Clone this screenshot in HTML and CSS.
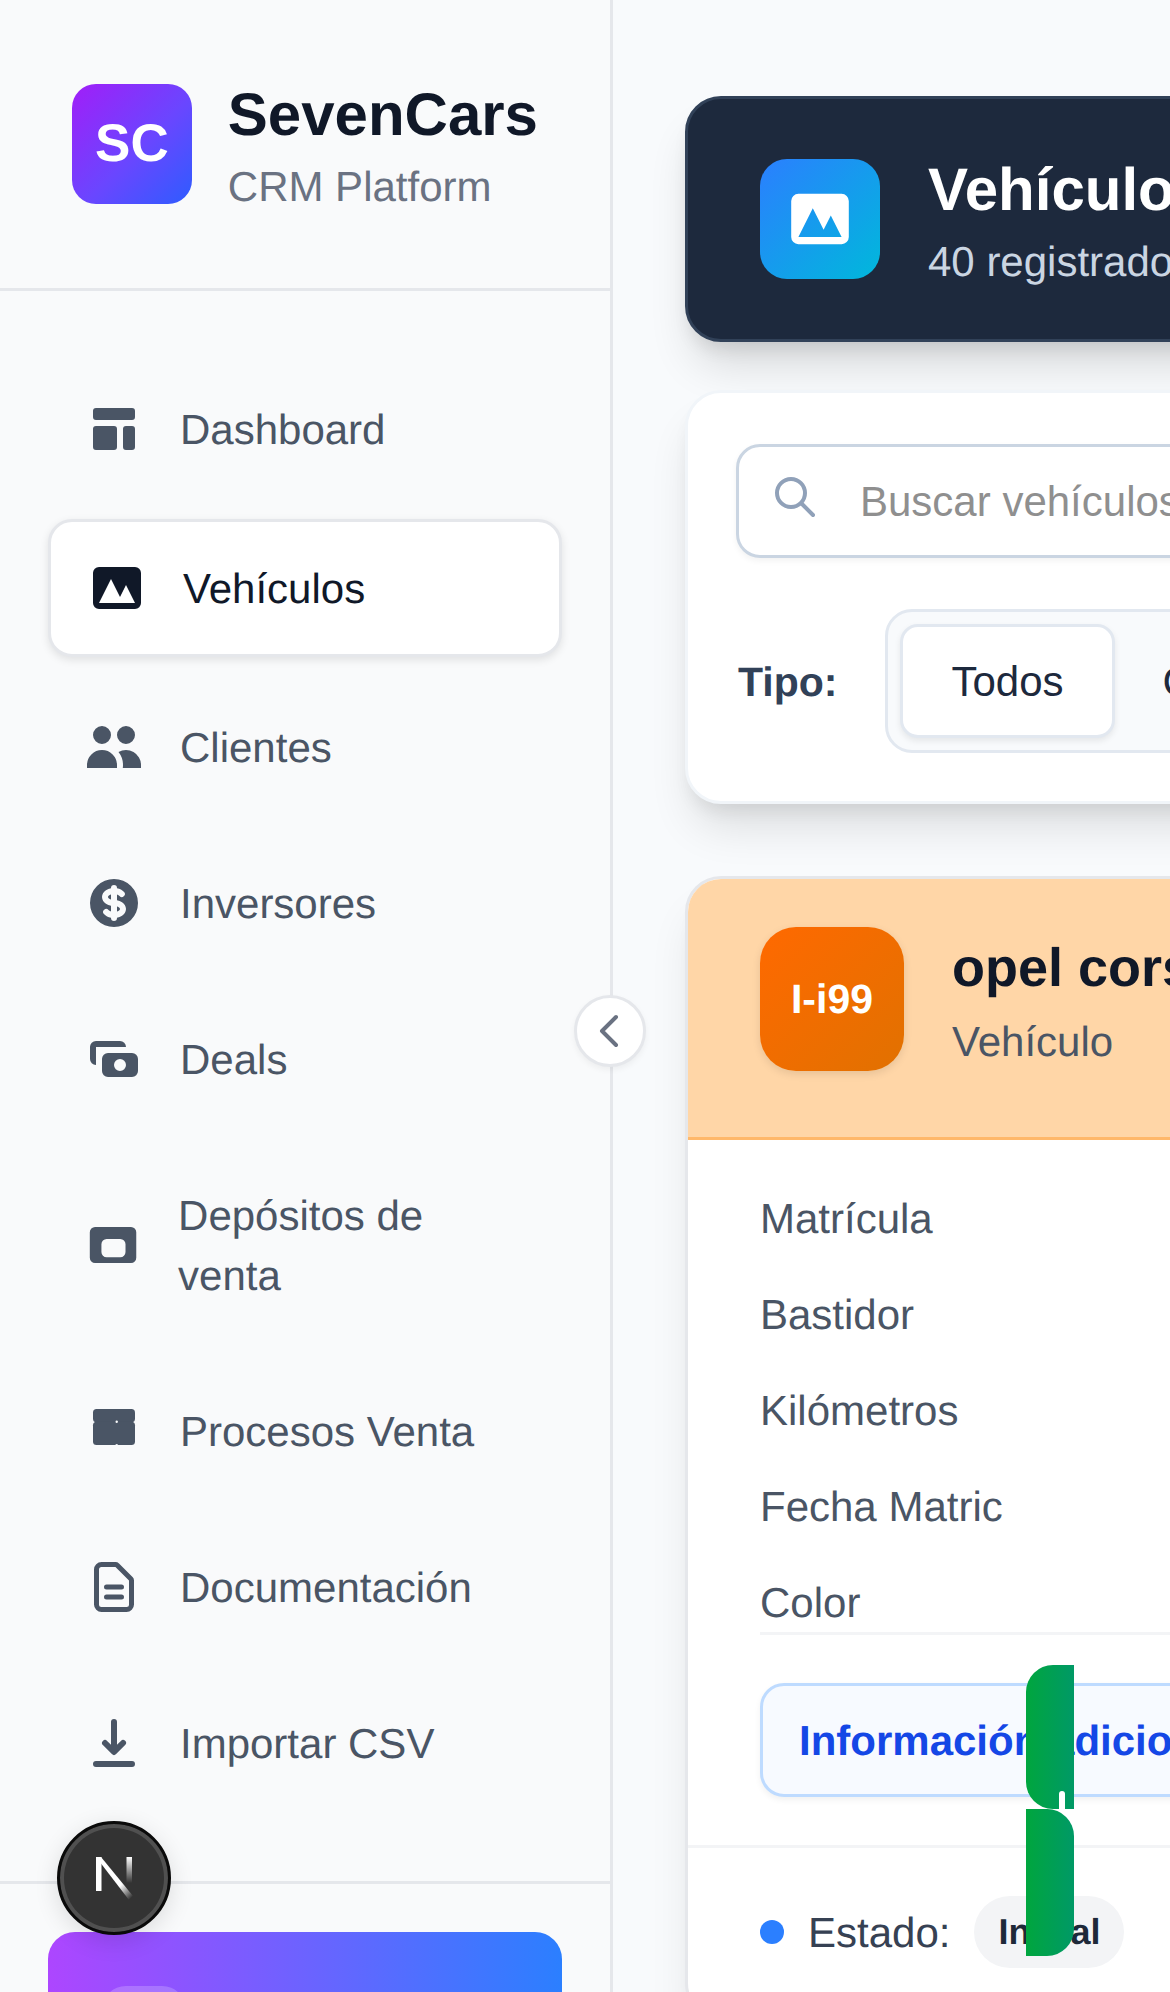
FILE: index.html
```html
<!doctype html>
<html lang="es">
<head>
<meta charset="utf-8">
<title>SevenCars CRM</title>
<link rel="stylesheet" href="styles.css">
</head>
<body>
<div class="app">
  <aside class="sidebar">
    <div class="brand">
      <div class="brand-logo">SC</div>
      <div>
        <div class="brand-name">SevenCars</div>
        <div class="brand-sub">CRM Platform</div>
      </div>
    </div>
    <nav class="nav">
      <a class="nav-item">
        <svg class="nav-icon" viewBox="0 0 20 20" fill="currentColor"><path d="M3 4a1 1 0 011-1h12a1 1 0 011 1v2a1 1 0 01-1 1H4a1 1 0 01-1-1V4zM3 10a1 1 0 011-1h6a1 1 0 011 1v6a1 1 0 01-1 1H4a1 1 0 01-1-1v-6zM14 9a1 1 0 00-1 1v6a1 1 0 001 1h2a1 1 0 001-1v-6a1 1 0 00-1-1h-2z"/></svg>
        <span>Dashboard</span>
      </a>
      <a class="nav-item active">
        <svg class="nav-icon" viewBox="0 0 20 20" fill="currentColor"><path fill-rule="evenodd" d="M4 3a2 2 0 00-2 2v10a2 2 0 002 2h12a2 2 0 002-2V5a2 2 0 00-2-2H4zm12 12H4l4-8 3 6 2-4 3 6z"/></svg>
        <span>Vehículos</span>
      </a>
      <a class="nav-item">
        <svg class="nav-icon" viewBox="0 0 20 20" fill="currentColor"><path d="M9 6a3 3 0 11-6 0 3 3 0 016 0zM17 6a3 3 0 11-6 0 3 3 0 016 0zM12.93 17c.046-.327.07-.66.07-1a6.97 6.97 0 00-1.5-4.33A5 5 0 0119 16v1h-6.07zM6 11a5 5 0 015 5v1H1v-1a5 5 0 015-5z"/></svg>
        <span>Clientes</span>
      </a>
      <a class="nav-item">
        <svg class="nav-icon" viewBox="0 0 20 20" fill="currentColor"><path d="M8.433 7.418c.155-.103.346-.196.567-.267v1.698a2.305 2.305 0 01-.567-.267C8.07 8.34 8 8.114 8 8c0-.114.07-.34.433-.582zM11 12.849v-1.698c.22.071.412.164.567.267.364.243.433.468.433.582 0 .114-.07.34-.433.582a2.305 2.305 0 01-.567.267z"/><path fill-rule="evenodd" d="M10 18a8 8 0 100-16 8 8 0 000 16zm1-13a1 1 0 10-2 0v.092a4.535 4.535 0 00-1.676.662C6.602 6.234 6 7.009 6 8c0 .99.602 1.765 1.324 2.246.48.32 1.054.545 1.676.662v1.941c-.391-.127-.68-.317-.843-.504a1 1 0 10-1.51 1.31c.562.649 1.413 1.076 2.353 1.253V15a1 1 0 102 0v-.092a4.535 4.535 0 001.676-.662C13.398 13.766 14 12.991 14 12c0-.99-.602-1.765-1.324-2.246A4.535 4.535 0 0011 9.092V7.151c.391.127.68.317.843.504a1 1 0 101.511-1.31c-.563-.649-1.413-1.076-2.354-1.253V5z"/></svg>
        <span>Inversores</span>
      </a>
      <a class="nav-item">
        <svg class="nav-icon" viewBox="0 0 20 20" fill="currentColor"><path fill-rule="evenodd" d="M4 4a2 2 0 00-2 2v4a2 2 0 002 2V6h10a2 2 0 00-2-2H4zm2 6a2 2 0 012-2h8a2 2 0 012 2v4a2 2 0 01-2 2H8a2 2 0 01-2-2v-4zm6 4a2 2 0 100-4 2 2 0 000 4z"/></svg>
        <span>Deals</span>
      </a>
      <a class="nav-item">
        <svg class="nav-icon" viewBox="0 0 20 20" fill="currentColor"><path fill-rule="evenodd" d="M3.800 3.800h12.400a1.800 1.800 0 011.800 1.800v8.800a1.800 1.800 0 01-1.800 1.800H3.800a1.800 1.800 0 01-1.800-1.800V5.600a1.800 1.800 0 011.800-1.800zM7.800 7.900a1.800 1.800 0 00-1.800 1.800v2.700a1.800 1.800 0 001.800 1.800h4.700a1.800 1.800 0 001.800-1.800V9.700a1.800 1.800 0 00-1.800-1.800z"/></svg>
        <span>Depósitos de venta</span>
      </a>
      <a class="nav-item">
        <svg class="nav-icon" viewBox="0 0 20 20" fill="currentColor"><rect x="3" y="2.700" width="14" height="4.400" rx="1.200"/><rect x="3" y="6.900" width="14" height="7.800" rx="1.200"/><circle class="nav-icon-gap" cx="10.900" cy="6.900" r=".4"/><circle class="nav-icon-gap" cx="10.900" cy="14.800" r=".5"/></svg>
        <span>Procesos Venta</span>
      </a>
      <a class="nav-item">
        <svg class="nav-icon" viewBox="0 0 24 24" fill="none" stroke="currentColor" stroke-width="2" stroke-linecap="round" stroke-linejoin="round"><path d="M9 12h6m-6 4h6m2 5H7a2 2 0 01-2-2V5a2 2 0 012-2h5.586a1 1 0 01.707.293l5.414 5.414a1 1 0 01.293.707V19a2 2 0 01-2 2z"/></svg>
        <span>Documentación</span>
      </a>
      <a class="nav-item">
        <svg class="nav-icon" viewBox="0 0 20 20" fill="currentColor"><path fill-rule="evenodd" d="M3 17a1 1 0 011-1h12a1 1 0 110 2H4a1 1 0 01-1-1zm3.293-7.707a1 1 0 011.414 0L9 10.586V3a1 1 0 112 0v7.586l1.293-1.293a1 1 0 111.414 1.414l-3 3a1 1 0 01-1.414 0l-3-3a1 1 0 010-1.414z"/></svg>
        <span>Importar CSV</span>
      </a>
    </nav>
    <div class="side-footer">
      <div class="user-card">
        <div class="user-avatar"></div>
      </div>
    </div>
  </aside>

  <main class="main">
    <div class="main-inner">
      <header class="page-head">
        <div class="page-icon">
          <svg viewBox="0 0 20 20" fill="currentColor"><path fill-rule="evenodd" d="M4 3a2 2 0 00-2 2v10a2 2 0 002 2h12a2 2 0 002-2V5a2 2 0 00-2-2H4zm12 12H4l4-8 3 6 2-4 3 6z"/></svg>
        </div>
        <div>
          <h1 class="page-title">Vehículos</h1>
          <div class="page-sub">40 registrados</div>
        </div>
      </header>

      <section class="filters">
        <div class="search">
          <svg class="search-icon" viewBox="0 0 24 24" fill="none" stroke="currentColor" stroke-width="2" stroke-linecap="round" stroke-linejoin="round"><path d="M21 21l-6-6m2-5a7 7 0 11-14 0 7 7 0 0114 0z"/></svg>
          <input class="search-input" type="text" placeholder="Buscar vehículos...">
        </div>
        <div class="type-row">
          <span class="type-label">Tipo:</span>
          <div class="segment">
            <button class="seg-btn on">Todos</button>
            <button class="seg-btn">Coches</button>
          </div>
        </div>
      </section>

      <article class="car">
        <div class="car-head">
          <div class="car-avatar">I-i99</div>
          <div>
            <h2 class="car-title">opel corsa</h2>
            <div class="car-sub">Vehículo</div>
          </div>
        </div>
        <div class="car-body">
          <ul class="specs">
            <li>Matrícula</li>
            <li>Bastidor</li>
            <li>Kilómetros</li>
            <li>Fecha Matric</li>
            <li>Color</li>
          </ul>
          <div class="more-info">Información adicional</div>
        </div>
        <div class="car-foot">
          <span class="dot"></span>
          <span class="state-label">Estado:</span>
          <span class="state-pill">Inicial</span>
        </div>
      </article>
    </div>
  </main>

  <!-- cosas que flotan encima -->
  <button class="collapse">
    <svg viewBox="0 0 24 24" fill="none" stroke="currentColor" stroke-width="2" stroke-linecap="round" stroke-linejoin="round"><path d="M15 19l-7-7 7-7"/></svg>
  </button>
  <div class="dev-badge">
    <svg viewBox="0 0 38 43" width="38" height="43">
      <defs>
        <linearGradient id="nDiag" x1="0.300" y1="0.300" x2="0.900" y2="1">
          <stop offset="0.550" stop-color="#fff"/>
          <stop offset="1" stop-color="#fff" stop-opacity="0"/>
        </linearGradient>
        <linearGradient id="nStem" x1="0" y1="0" x2="0" y2="1">
          <stop offset="0" stop-color="#fff"/>
          <stop offset="1" stop-color="#fff" stop-opacity="0"/>
        </linearGradient>
      </defs>
      <rect x="0" y="0" width="5.500" height="34" fill="#fff"/>
      <polygon points="0,0 5,0 37,39 33,43" fill="url(#nDiag)"/>
      <rect x="30.500" y="0" width="5.500" height="26" fill="url(#nStem)"/>
    </svg>
  </div>
  <div class="tab tab-top"><span class="tab-notch"></span></div>
  <div class="tab tab-bottom"></div>
</div>
</body>
</html>
```

FILE: styles.css
```css
* {
	box-sizing: border-box;
}
html, body {
	margin: 0;
	padding: 0;
}
body {
	width: 1170px;
	height: 1992px;
	overflow: hidden;
	font-family: "Liberation Sans", Arial, sans-serif;
	font-size: 42px;
	line-height: 60px;
	color: #101828;
	text-rendering: geometricPrecision;
}
h1, h2, ul {
	margin: 0;
	padding: 0;
}
.app {
	position: relative;
	display: flex;
	width: 1170px;
	height: 1992px;
	overflow: hidden;
	background: #f8fafc;
}

/* el texto cae 1px mas abajo, sin cambiar la altura de la linea */
.brand-name, .brand-sub, .nav-item span, .page-title, .page-sub,
.type-label, .car-sub, .specs li, .state-label {
	padding-top: 1px;
	margin-bottom: -1px;
}

/* sidebar */
.sidebar {
	flex: none;
	width: 613px;
	height: 1992px;
	background: #f9fafb;
	border-right: 3px solid #e5e7eb;
}
.brand {
	display: flex;
	align-items: center;
	gap: 36px;
	padding: 72px;
	border-bottom: 3px solid #e5e7eb;
}
.brand-logo {
	display: flex;
	align-items: center;
	justify-content: center;
	width: 120px;
	height: 120px;
	border-radius: 24px;
	background: linear-gradient(135deg, #a11ef8, #6a46ff 55%, #2e5cff);
	color: #fff;
	font-size: 53px;
	font-weight: bold;
}
.brand-name {
	font-size: 60px;
	line-height: 84px;
	font-weight: bold;
	color: #101828;
}
.brand-sub {
	color: #6a7282;
}
.nav {
	display: flex;
	flex-direction: column;
	gap: 24px;
	padding: 72px 48px;
}
.nav-item {
	display: flex;
	align-items: center;
	gap: 36px;
	padding: 36px;
	border-radius: 24px;
	color: #4a5565;
}
.nav-item.active {
	background: #fff;
	color: #101828;
	border: 3px solid #e5e7eb;
	box-shadow: 0 3px 9px rgba(0, 0, 0, .1);
}
.nav-icon {
	width: 60px;
	height: 60px;
}
.nav-icon-gap {
	fill: #f9fafb;
}
.side-footer {
	padding: 48px;
	border-top: 3px solid #e5e7eb;
}
.user-card {
	height: 240px;
	padding: 54px;
	border-radius: 27px;
	background: linear-gradient(90deg, #ad46ff, #2b7fff);
}
.user-avatar {
	width: 84px;
	height: 84px;
	border-radius: 24px;
	background: rgba(255, 255, 255, .2);
}

/* main */
.main {
	flex: 1;
	min-width: 0;
	padding: 96px 0 0 72px;
}
.main-inner {
	width: 1100px;
}
.page-head {
	display: flex;
	align-items: center;
	gap: 48px;
	padding: 48px 72px;
	margin-bottom: 48px;
	border: 3px solid #314158;
	border-radius: 36px;
	background: #1d293d;
	box-shadow: 0 30px 45px -9px rgba(0, 0, 0, .14), 0 12px 18px -6px rgba(0, 0, 0, .1);
}
.page-icon {
	display: flex;
	align-items: center;
	justify-content: center;
	width: 120px;
	height: 120px;
	border-radius: 27px;
	background: linear-gradient(135deg, #2b7fff, #00b8db);
	color: #fff;
}
.page-icon svg {
	width: 72px;
	height: 72px;
}
.page-title {
	font-size: 60px;
	line-height: 84px;
	color: #fff;
}
.page-sub {
	color: #cad5e2;
}
.filters {
	padding: 51px 48px 48px;
	margin-bottom: 72px;
	border: 3px solid #f1f5f9;
	border-radius: 36px;
	background: #fff;
	box-shadow: 0 30px 45px -9px rgba(0, 0, 0, .12), 0 12px 18px -6px rgba(0, 0, 0, .08);
}
.search {
	display: flex;
	align-items: center;
	gap: 41px;
	height: 114px;
	padding-left: 32px;
	margin-bottom: 51px;
	border: 3px solid #cad5e2;
	border-radius: 24px;
	background: #fff;
	box-shadow: 0 3px 6px rgba(0, 0, 0, .05);
}
.search-icon {
	flex: none;
	width: 48px;
	height: 48px;
	margin-bottom: 8px;
	color: #90a1b9;
}
.search-input {
	flex: 1;
	min-width: 0;
	border: 0;
	outline: 0;
	padding: 2px 0 0;
	background: none;
	font: inherit;
	color: #101828;
}
.search-input::placeholder {
	color: #8f8f8f;
	opacity: 1;
}
.type-row {
	display: flex;
	align-items: center;
	gap: 48px;
}
.type-label {
	margin-left: 2px;
	font-size: 41px;
	font-weight: bold;
	color: #314158;
}
.segment {
	display: flex;
	padding: 12px;
	border: 3px solid #e2e8f0;
	border-radius: 27px;
	background: #f8fafc;
}
.seg-btn {
	height: 114px;
	padding: 2px 48px 0;
	border: 0;
	border-radius: 18px;
	background: none;
	font-family: inherit;
	font-size: 42px;
	color: #1d293d;
	white-space: nowrap;
}
.seg-btn.on {
	background: #fff;
	border: 3px solid #e2e8f0;
	box-shadow: 0 3px 6px rgba(0, 0, 0, .08);
}

/* tarjeta vehiculo */
.car {
	border: 3px solid #e5e7eb;
	border-radius: 36px;
	background: #fff;
	box-shadow: 0 30px 45px -9px rgba(0, 0, 0, .1), 0 12px 18px -12px rgba(0, 0, 0, .1);
	overflow: hidden;
}
.car-head {
	display: flex;
	align-items: center;
	gap: 48px;
	padding: 48px 72px 66px;
	background: #ffd6a7;
	border-bottom: 3px solid #ffb86a;
}
.car-avatar {
	display: flex;
	align-items: center;
	justify-content: center;
	width: 144px;
	height: 144px;
	border-radius: 36px;
	background: linear-gradient(135deg, #ff6900, #e17100);
	box-shadow: 0 3px 9px rgba(0, 0, 0, .1);
	color: #fff;
	font-size: 41px;
	font-weight: bold;
}
.car-title {
	padding-top: 1px;
	font-size: 54px;
	line-height: 81px;
	margin-bottom: 2px;
	color: #101828;
	white-space: nowrap;
}
.car-sub {
	color: #4a5565;
}
.car-body {
	padding: 48px 72px;
}
.specs {
	display: flex;
	flex-direction: column;
	gap: 36px;
	margin-bottom: 48px;
	border-bottom: 3px solid #f3f4f6;
	list-style: none;
	color: #4a5565;
}
.more-info {
	height: 114px;
	padding: 25px 36px 0;
	border: 3px solid #bedbff;
	border-radius: 24px;
	background: #f7faff;
	box-shadow: 0 3px 6px rgba(0, 0, 0, .06);
	color: #1447e6;
	font-weight: bold;
	white-space: nowrap;
}
.car-foot {
	display: flex;
	align-items: center;
	padding: 48px 72px;
	border-top: 3px solid #f3f4f6;
}
.dot {
	width: 24px;
	height: 24px;
	margin-right: 24px;
	border-radius: 50%;
	background: #2b7fff;
}
.state-label {
	margin-right: 24px;
	color: #364153;
}
.state-pill {
	height: 72px;
	padding: 0 24px;
	border-radius: 36px;
	background: #f3f4f6;
	color: #1e2939;
	font-size: 36px;
	line-height: 72px;
	font-weight: bold;
}

/* flotantes */
.collapse {
	position: absolute;
	left: 574px;
	top: 995px;
	display: flex;
	align-items: center;
	justify-content: center;
	width: 72px;
	height: 72px;
	padding: 0;
	border: 3px solid #e5e7eb;
	border-radius: 50%;
	background: #fff;
	box-shadow: 0 3px 6px rgba(0, 0, 0, .05);
	color: #6a7282;
}
.collapse svg {
	flex: none;
	width: 48px;
	height: 48px;
}
.dev-badge {
	position: absolute;
	left: 57px;
	top: 1821px;
	display: flex;
	align-items: center;
	justify-content: center;
	width: 114px;
	height: 114px;
	padding-left: 2px;
	border: 3px solid #0a0a0a;
	border-radius: 50%;
	background: #333;
	box-shadow: inset 0 0 0 4px #505050, 0 6px 24px rgba(0, 0, 0, .12);
}
.tab {
	position: absolute;
	left: 1026px;
	width: 48px;
	background: linear-gradient(90deg, #00a63e, #009966);
}
.tab-top {
	top: 1665px;
	height: 144px;
	border-radius: 27px 0 0 27px;
}
.tab-bottom {
	top: 1809px;
	height: 147px;
	border-radius: 0 27px 27px 0;
}
.tab-notch {
	position: absolute;
	left: 33px;
	bottom: 0;
	width: 6px;
	height: 18px;
	border-radius: 3px 3px 0 0;
	background: #fff;
}
```
